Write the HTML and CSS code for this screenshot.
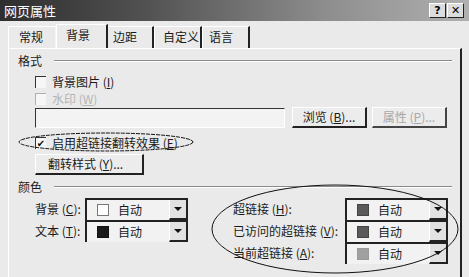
FILE: index.html
```html
<!DOCTYPE html>
<html>
<head>
<meta charset="utf-8">
<link rel="stylesheet" href="styles.css">
</head>
<body>
<div class="window">
  <div class="titlebar">
    <span class="title">网页属性</span>
    <div class="tbtns"><span class="tbtn">?</span><span class="tbtn">✕</span></div>
  </div>
  <div class="tabs">
    <span class="tab t1">常规</span>
    <span class="tab t2 active">背景</span>
    <span class="tab t3">边距</span>
    <span class="tab t4">自定义</span>
    <span class="tab t5">语言</span>
  </div>
  <div class="panel">
    <div class="group-head"><span>格式</span><i class="rule"></i></div>
    <div class="indent">
      <label class="chk first"><span class="box"></span>背景图片 (<u>I</u>)</label>
      <label class="chk dis"><span class="box"></span>水印 (<u>W</u>)</label>
      <div class="row-input">
        <span class="input"></span>
        <span class="btn">浏览 (<u>B</u>)...</span>
        <span class="btn dis">属性 (<u>P</u>)...</span>
      </div>
      <label class="chk on"><span class="box">✔</span>启用超链接翻转效果 (<u>E</u>)</label>
      <span class="btn wide">翻转样式 (<u>Y</u>)...</span>
    </div>
    <div class="group-head g2"><span>颜色</span><i class="rule"></i></div>
    <div class="colors">
      <div class="col left">
        <div class="crow"><span class="lab">背景 (<u>C</u>):</span><span class="combo"><i class="sw white"></i>自动<b class="arr"></b></span></div>
        <div class="crow"><span class="lab">文本 (<u>T</u>):</span><span class="combo"><i class="sw black"></i>自动<b class="arr"></b></span></div>
      </div>
      <div class="col right">
        <div class="crow"><span class="lab">超链接 (<u>H</u>):</span><span class="combo"><i class="sw dark"></i>自动<b class="arr"></b></span></div>
        <div class="crow"><span class="lab">已访问的超链接 (<u>V</u>):</span><span class="combo"><i class="sw dark"></i>自动<b class="arr"></b></span></div>
        <div class="crow"><span class="lab">当前超链接 (<u>A</u>):</span><span class="combo"><i class="sw mid"></i>自动<b class="arr"></b></span></div>
      </div>
    </div>
  </div>
  <svg class="ellipses" width="469" height="277" viewBox="0 0 469 277">
    <ellipse cx="106" cy="142" rx="87" ry="9" fill="none" stroke="#111" stroke-width="1" stroke-dasharray="4 1"/>
    <ellipse cx="335" cy="229" rx="123" ry="44" fill="none" stroke="#111" stroke-width="1"/>
  </svg>
</div>
</body>
</html>
```
FILE: styles.css
```css
* { box-sizing: border-box; }
html, body { margin: 0; padding: 0; }
body {
  width: 469px; height: 277px; overflow: hidden;
  background: #eaeaea;
  font-family: "Noto Sans CJK SC", "DejaVu Sans", sans-serif;
  font-size: 12px; line-height: 14px; color: #1a1a1a;
}
u { text-decoration: underline; text-underline-offset: 1px; }
.window { position: relative; width: 469px; height: 277px; display: flex; flex-direction: column; }
.titlebar {
  height: 21px; flex: none; display: flex; align-items: center; justify-content: space-between;
  background: linear-gradient(90deg, #2e2e2e 0%, #505050 30%, #8e8e8e 70%, #b0b0b0 100%);
  padding: 0 5px 0 4px;
}
.title { color: #fff; font-size: 13px; line-height: 15px; }
.tbtns { display: flex; gap: 1px; }
.tbtn {
  width: 17px; height: 15px; background: #dcdcdc; color: #000;
  border: 1px solid; border-color: #fff #222 #222 #fff;
  font: bold 11px/13px "DejaVu Sans", sans-serif; text-align: center;
}
.tabs { display: flex; align-items: flex-end; height: 27px; flex: none; padding-left: 8px; }
.tab {
  height: 22px; line-height: 20px; font-size: 12px; white-space: nowrap;
  border-top: 1px solid #fff; border-left: 1px solid #fff; border-right: 2px solid #222;
}
.t1 { width: 48px; padding-left: 10px; border-right: 1px solid #f5f5f5; }
.t2 { width: 52px; padding-left: 9px; height: 24px; line-height: 20px; border-right: 2px solid #222; border-left: 1px solid #fff; }
.t3 { width: 46px; padding-left: 5px; border-left: 0; }
.t4 { width: 48px; padding-left: 8px; }
.t5 { width: 48px; padding-left: 6px; }
.panel {
  flex: 1; margin: 0 7px 0 8px; border-top: 1px solid #fff; border-left: 1px solid #fff;
  border-right: 2px solid #222; padding: 4px 0 0 9px; display: flex; flex-direction: column;
}
.group-head { display: flex; align-items: center; gap: 12px; height: 16px; font-size: 12px; padding-right: 8px; }
.group-head .rule { flex: 1; height: 2px; border-top: 1px solid #8a8a8a; border-bottom: 1px solid #fff; }
.group-head.g2 { margin-top: 4px; }
.indent { padding-left: 17px; display: flex; flex-direction: column; }
.chk { display: flex; align-items: center; height: 17px; font-size: 12px; line-height: 14px; white-space: nowrap; }
.chk.first { margin-top: 4px; }
.chk .box {
  width: 11px; height: 12px; margin-right: 6px; background: #f6f6f6;
  border-top: 1px solid #333; border-left: 1px solid #333;
  font: 10px/11px "DejaVu Sans", sans-serif; text-align: center; color: #111;
}
.chk.dis { color: #b5b5b5; }
.chk.dis .box { border-color: #b0b0b0; }
.row-input { display: flex; align-items: center; height: 21px; margin-top: 0; }
.input {
  width: 250px; height: 20px; background: #f3f3f3; margin-right: 7px;
  border-top: 1px solid #333; border-left: 1px solid #333; border-bottom: 1px solid #fff; border-right: 1px solid #fff;
}
.btn {
  height: 21px; width: 75px; display: inline-flex; align-items: center; justify-content: center;
  font-size: 12px; white-space: nowrap; background: #ececec;
  border-top: 1px solid #fff; border-left: 1px solid #fff; border-right: 2px solid #222; border-bottom: 2px solid #222;
}
.btn + .btn { margin-left: 5px; }
.btn.dis { color: #a8a8a8; border-right-color: #444; border-bottom-color: #444; }
.chk.on { margin-top: 6px; height: 17px; }
.btn.wide { width: 109px; height: 21px; margin-top: 3px; justify-content: flex-start; padding-left: 12px; }
.colors { display: flex; padding-left: 17px; margin-top: 3px; }
.col { display: flex; flex-direction: column; }
.col.left { width: 198px; }
.col.left .lab { width: 50px; }
.col.right .lab { width: 112px; }
.crow { display: flex; align-items: center; height: 22px; font-size: 12px; white-space: nowrap; }
.combo {
  width: 103px; height: 22px; display: flex; align-items: center; position: relative;
  background: #f2f2f2; border-top: 2px solid #222; border-left: 2px solid #222;
  padding-left: 10px;
}
.sw { width: 12px; height: 12px; margin-right: 9px; border: 1px solid #777; }
.sw.white { background: #fff; }
.sw.black { background: #1a1a1a; border-color: #111; }
.sw.dark { background: #5a5a5a; border-color: #444; }
.sw.mid { background: #a0a0a0; border-color: #999; }
.arr {
  position: absolute; right: 0; top: 0; width: 19px; height: 20px; background: #e2e2e2;
  border-right: 2px solid #222; border-bottom: 2px solid #222; border-left: 1px solid #fff;
}
.arr::after {
  content: ""; position: absolute; left: 4px; top: 7px;
  border-left: 4px solid transparent; border-right: 4px solid transparent; border-top: 4px solid #111;
}
.ellipses { position: absolute; left: 0; top: 0; pointer-events: none; }
```
